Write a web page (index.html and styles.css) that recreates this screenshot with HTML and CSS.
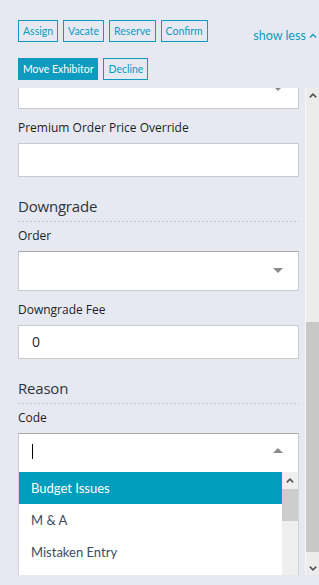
FILE: index.html
```html
<!DOCTYPE html>
<html>
<head>
    <title>Exhibitor Actions</title>
    <link rel="stylesheet" href="styles.css">
</head>
<body>
    <div class="toolbar">
        <div class="btn-row">
            <button class="btn">Assign</button>
            <button class="btn">Vacate</button>
            <button class="btn">Reserve</button>
            <button class="btn">Confirm</button>
            <a class="toggle">show less
                <svg width="8" height="5" viewBox="0 0 8 5"><path d="M1 4.5 L4 1.5 L7 4.5" fill="none" stroke="#0d9bbf" stroke-width="1.3"/></svg>
            </a>
        </div>
        <div class="btn-row">
            <button class="btn btn-primary">Move Exhibitor</button>
            <button class="btn">Decline</button>
        </div>
    </div>

    <div class="panel">
        <div class="panel-body">
            <div class="field">
                <div class="select select-cut"><span class="arrow"></span></div>
            </div>
            <div class="field">
                <label>Premium Order Price Override</label>
                <div class="input"></div>
            </div>

            <h2 class="section-title">Downgrade</h2>
            <div class="field">
                <label>Order</label>
                <div class="select"><span class="arrow"></span></div>
            </div>
            <div class="field">
                <label>Downgrade Fee</label>
                <div class="input">0</div>
            </div>

            <h2 class="section-title">Reason</h2>
            <div class="field">
                <label>Code</label>
                <div class="select combo">
                    <span class="caret"></span>
                    <span class="arrow arrow-up"></span>
                    <div class="dropdown">
                        <ul class="options">
                            <li class="active">Budget Issues</li>
                            <li>M &amp; A</li>
                            <li>Mistaken Entry</li>
                        </ul>
                        <div class="list-scroll">
                            <span class="sb-btn">
                                <svg width="8" height="5" viewBox="0 0 8 5"><path d="M0.8 4.4 L4 1.2 L7.2 4.4" fill="none" stroke="#555" stroke-width="1.6"/></svg>
                            </span>
                            <div class="list-thumb"></div>
                        </div>
                    </div>
                </div>
            </div>
        </div>

        <div class="scrollbar">
            <span class="sb-btn">
                <svg width="8" height="5" viewBox="0 0 8 5"><path d="M0.8 4.4 L4 1.2 L7.2 4.4" fill="none" stroke="#555" stroke-width="1.6"/></svg>
            </span>
            <div class="sb-track"><div class="sb-thumb"></div></div>
            <span class="sb-btn">
                <svg width="8" height="5" viewBox="0 0 8 5"><path d="M0.8 0.6 L4 3.8 L7.2 0.6" fill="none" stroke="#555" stroke-width="1.6"/></svg>
            </span>
        </div>
    </div>
</body>
</html>
```

FILE: styles.css
```css
body {
    margin: 0;
    width: 319px;
    height: 585px;
    overflow: hidden;
    background-color: #e6e9f1;
    font-family: "Open Sans", "Noto Sans", sans-serif;
    color: #1e1e1e;
}
.toolbar {
    padding: 20px 2px 0 18px;
}
.btn-row {
    display: flex;
    gap: 5px;
    margin-bottom: 16px;
}
.btn-row:last-child {
    margin-bottom: 8px;
}
.btn {
    height: 22px;
    padding: 0 4px;
    border: 1px solid #0d9bbf;
    background-color: transparent;
    color: #0d9bbf;
    font-family: Lato, sans-serif;
    font-size: 10.5px;
    line-height: 20px;
}
.btn-primary {
    background-color: #0d9bbf;
    color: white;
}
.toggle {
    margin-left: auto;
    align-self: flex-end;
    margin-bottom: -2px;
    color: #0d9bbf;
    font-family: Lato, sans-serif;
    font-size: 12.5px;
    line-height: 16px;
    white-space: nowrap;
}
.toggle svg {
    vertical-align: 2px;
}

.panel {
    display: flex;
    height: 487px;
}
.panel-body {
    flex: 1;
    overflow: hidden;
    padding: 0 6px 0 18px;
}
.field {
    margin-bottom: 11px;
}
label {
    display: block;
    font-size: 12px;
    line-height: 16px;
    margin-bottom: 7px;
}
.input {
    box-sizing: border-box;
    height: 34px;
    padding: 0 13px;
    background-color: white;
    border: 1px solid #cbcbcb;
    font-size: 14px;
    line-height: 32px;
    color: #1a2540;
}
.select {
    box-sizing: border-box;
    position: relative;
    height: 40px;
    background-color: white;
    border: 1px solid #cbcbcb;
    border-top-color: #a8a8a8;
}
.select-cut {
    margin-top: -19px;
}
.arrow {
    position: absolute;
    right: 15px;
    top: 16px;
    border-left: 5px solid transparent;
    border-right: 5px solid transparent;
    border-top: 5px solid #8a8a8a;
}
.arrow-up {
    top: 14px;
    border-top: none;
    border-bottom: 5px solid #8a8a8a;
}
.caret {
    position: absolute;
    left: 13px;
    top: 10px;
    width: 1px;
    height: 15px;
    background-color: #000;
}
.section-title {
    margin: 19px 0 5px;
    padding-bottom: 6px;
    font-size: 15px;
    letter-spacing: -0.2px;
    line-height: 20px;
    font-weight: normal;
    color: #2d3340;
    border-bottom: 1px solid transparent;
    background: linear-gradient(to right, #c2c6ce 50%, transparent 50%) left bottom / 4px 1px repeat-x;
}

.dropdown {
    position: absolute;
    top: 100%;
    left: -1px;
    right: -1px;
    display: flex;
    background-color: white;
    border: 1px solid #d4d4d4;
    border-top: none;
}
.options {
    flex: 1;
    margin: 0;
    padding: 0 0 40px;
    list-style: none;
    font-family: Lato, sans-serif;
    font-size: 13px;
    color: #3e4c5e;
}
.options li {
    height: 32px;
    line-height: 32px;
    padding-left: 12px;
}
.options li.active {
    background-color: #009dbf;
    color: white;
}
.list-scroll {
    width: 16px;
    background-color: #efefef;
}
.list-scroll .sb-btn {
    height: 17px;
}
.list-thumb {
    height: 32px;
    background-color: #cdcdcd;
}

.scrollbar {
    display: flex;
    flex-direction: column;
    width: 13px;
    border-left: 1px solid #f6f6f6;
    background-color: #ececec;
}
.sb-btn {
    display: flex;
    align-items: center;
    justify-content: center;
    height: 14px;
}
.sb-track {
    flex: 1;
    padding-top: 220px;
}
.sb-thumb {
    height: 230px;
    background-color: #c8c8c8;
}
```
